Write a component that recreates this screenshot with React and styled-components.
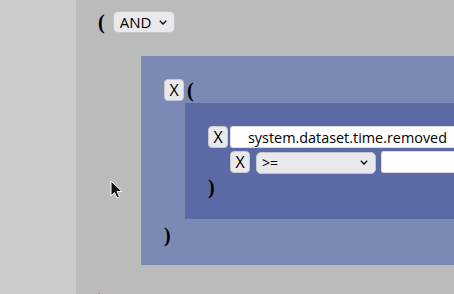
import React from "react";
import styled, { createGlobalStyle } from "styled-components";

const Global = createGlobalStyle`
  html, body { margin: 0; padding: 0; }
  body {
    width: 454px;
    height: 294px;
    overflow: hidden;
    background: #bbbbbb;
    font-family: "Open Sans", "DejaVu Sans", sans-serif;
  }
`;

const Page = styled.div`
  display: flex;
  width: 454px;
  height: 294px;
  position: relative;
  overflow: hidden;
`;

const Sidebar = styled.div`
  width: 76px;
  flex: none;
  background: #cbcbcb;
`;

const Main = styled.div`
  flex: 1;
  background: #bbbbbb;
  padding: 11px 0 0 22px;
  min-width: 0;
`;

const Row = styled.div`
  display: flex;
  align-items: ${(p) => p.$align || "center"};
  gap: ${(p) => p.$gap || 0}px;
  margin-left: ${(p) => p.$indent || 0}px;
  margin-top: ${(p) => p.$top || 0}px;
`;

const Paren = styled.span`
  font-family: "Liberation Serif", "Times New Roman", serif;
  font-weight: bold;
  font-size: 20px;
  line-height: 22px;
  color: #000;
  display: inline-block;
  margin-left: ${(p) => p.$ml || 0}px;
  margin-top: ${(p) => p.$mt || 0}px;
`;

const Group = styled.div`
  background: ${(p) => p.$bg};
  margin-left: ${(p) => p.$ml}px;
  margin-top: ${(p) => p.$mt}px;
  padding: 23px 0 0 23px;
  height: ${(p) => p.$h}px;
  box-sizing: border-box;
  width: 400px;
`;

const Btn = styled.button`
  box-sizing: border-box;
  height: 22px;
  width: ${(p) => p.$w || 20}px;
  padding: 0;
  margin: 0;
  background: #e9e9ed;
  border: 1px solid #c8c8d0;
  border-radius: 4px;
  font-family: "Open Sans", "DejaVu Sans", sans-serif;
  font-size: 16px;
  line-height: 20px;
  color: #000;
  flex: none;
`;

const SelectWrap = styled.div`
  position: relative;
  width: ${(p) => p.$w}px;
  height: 22px;
  flex: none;
  margin-left: ${(p) => p.$ml || 0}px;
`;

const Select = styled.select`
  appearance: none;
  box-sizing: border-box;
  width: 100%;
  height: 22px;
  margin: 0;
  padding: 0 0 0 ${(p) => p.$pl || 6}px;
  background: #e9e9ed;
  border: 1px solid #c4c4cc;
  border-radius: 5px;
  font-family: "Open Sans", "DejaVu Sans", sans-serif;
  font-size: ${(p) => p.$fs || 15}px;
  color: #000;
`;

const Chevron = styled.svg`
  position: absolute;
  right: ${(p) => p.$r}px;
  top: 9px;
  pointer-events: none;
`;

const TextInput = styled.input`
  box-sizing: border-box;
  height: 22px;
  width: ${(p) => p.$w}px;
  margin: 0 0 0 ${(p) => p.$ml || 0}px;
  padding: 0 0 0 ${(p) => p.$pl || 4}px;
  border: 1px solid #dcdce2;
  border-right: none;
  border-radius: 3px 0 0 3px;
  background: #fff;
  font-family: "Open Sans", "DejaVu Sans", sans-serif;
  font-size: 14.4px;
  color: #000;
  flex: none;
  outline: none;
`;

const Cursor = styled.svg`
  position: absolute;
  left: 110px;
  top: 180px;
`;

function ChevronIcon({ r }) {
  return (
    <Chevron $r={r} width="8" height="5" viewBox="0 0 8 5">
      <path d="M0.8 0.8 L4 4 L7.2 0.8" fill="none" stroke="#000" strokeWidth="1.3" />
    </Chevron>
  );
}

export default function App() {
  return (
    <>
      <Global />
      <Page>
        <Sidebar />
        <Main>
          <Row $gap={8}>
            <Paren $mt={-1}>(</Paren>
            <SelectWrap $w={62}>
              <Select $pl={6} $fs={15} defaultValue="AND">
                <option>AND</option>
                <option>OR</option>
              </Select>
              <ChevronIcon r={8} />
            </SelectWrap>
          </Row>
          <Group $bg="#7b89b5" $ml={43} $mt={23} $h={209}>
            <Row>
              <Btn>X</Btn>
              <Paren $ml={3}>(</Paren>
            </Row>
            <Group $bg="#5b6aa5" $ml={21} $mt={2} $h={116}>
              <Row>
                <Btn>X</Btn>
                <TextInput $w={240} $ml={2} $pl={17} defaultValue="system.dataset.time.removed" />
              </Row>
              <Row $indent={22} $top={3}>
                <Btn>X</Btn>
                <SelectWrap $w={120} $ml={6}>
                  <Select $pl={5} $fs={14} defaultValue=">=">
                    <option>&gt;=</option>
                    <option>&lt;=</option>
                  </Select>
                  <ChevronIcon r={8} />
                </SelectWrap>
                <TextInput $w={80} $ml={5} defaultValue="" />
              </Row>
              <Row $top={3}>
                <Paren>)</Paren>
              </Row>
            </Group>
            <Row $top={5}>
              <Paren>)</Paren>
            </Row>
          </Group>
          <Row $top={25} $indent={0}>
            <Paren>)</Paren>
          </Row>
        </Main>
        <Cursor width="14" height="20" viewBox="0 0 14 20">
          <path d="M1 1 L1 16 L4.5 12.5 L7 18 L9.5 17 L7 11.5 L12 11.5 Z" fill="#111" stroke="#fff" strokeWidth="1" />
        </Cursor>
      </Page>
    </>
  );
}
